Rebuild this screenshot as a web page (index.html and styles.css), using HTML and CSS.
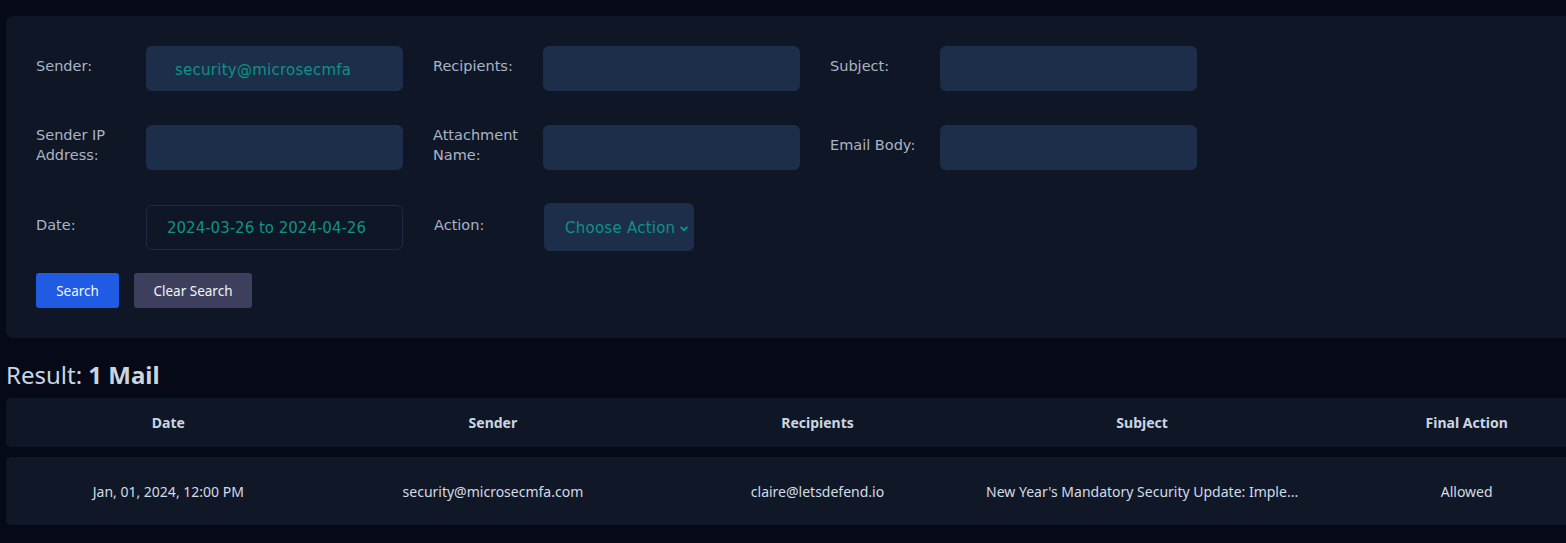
FILE: index.html
```html
<!DOCTYPE html>
<html lang="en">
<head>
<meta charset="utf-8">
<title>Mail Search</title>
<link rel="stylesheet" href="styles.css">
</head>
<body>
<div class="page">
  <section class="panel">
    <div class="form-row">
      <div class="field">
        <label class="label">Sender:</label>
        <div class="input filled">security@microsecmfa</div>
      </div>
      <div class="field">
        <label class="label">Recipients:</label>
        <div class="input"></div>
      </div>
      <div class="field">
        <label class="label">Subject:</label>
        <div class="input"></div>
      </div>
    </div>
    <div class="form-row">
      <div class="field">
        <label class="label">Sender IP Address:</label>
        <div class="input"></div>
      </div>
      <div class="field">
        <label class="label">Attachment Name:</label>
        <div class="input"></div>
      </div>
      <div class="field">
        <label class="label">Email Body:</label>
        <div class="input"></div>
      </div>
    </div>
    <div class="form-row last">
      <div class="field">
        <label class="label">Date:</label>
        <div class="input date">2024-03-26 to 2024-04-26</div>
      </div>
      <div class="field action">
        <label class="label">Action:</label>
        <div class="select">
          <span>Choose Action</span>
          <svg class="chev" width="8" height="6" viewBox="0 0 8 6"><path d="M1.2 1.4 L4 4.2 L6.8 1.4" fill="none" stroke="currentColor" stroke-width="2" stroke-linecap="round" stroke-linejoin="round"/></svg>
        </div>
      </div>
    </div>
    <div class="buttons">
      <button class="btn btn-primary">Search</button>
      <button class="btn btn-secondary">Clear Search</button>
    </div>
  </section>

  <h2 class="result">Result: <strong>1 Mail</strong></h2>

  <div class="table">
    <div class="thead">
      <div class="cell">Date</div>
      <div class="cell">Sender</div>
      <div class="cell">Recipients</div>
      <div class="cell">Subject</div>
      <div class="cell">Final Action</div>
    </div>
    <div class="trow">
      <div class="cell">Jan, 01, 2024, 12:00 PM</div>
      <div class="cell">security@microsecmfa.com</div>
      <div class="cell">claire@letsdefend.io</div>
      <div class="cell">New Year's Mandatory Security Update: Imple...</div>
      <div class="cell">Allowed</div>
    </div>
  </div>
</div>
</body>
</html>
```
FILE: styles.css
```css
html, body {
  margin: 0;
  padding: 0;
  overflow: hidden;
  background: #060a18;
}
body {
  font-family: "Noto Sans", "Open Sans", sans-serif;
  color: #cbd5e1;
}
.page {
  width: 1623px;
  padding: 16px 0 0 6px;
}
.panel {
  background: #0f1726;
  border-radius: 7px;
  padding: 30px;
  display: flex;
  flex-direction: column;
  gap: 34px;
}
.form-row {
  display: flex;
  align-items: center;
  gap: 30px;
}
.form-row.last {
  margin-top: -1px;
}
.field {
  display: flex;
  align-items: center;
}
.field.action {
  margin-left: 1px;
}
.label {
  width: 110px;
  flex: none;
  font-family: "DejaVu Sans", Verdana, sans-serif;
  font-size: 14.5px;
  line-height: 20px;
  color: #aab4c3;
  padding-bottom: 5px;
  padding-right: 10px;
  box-sizing: border-box;
}
.input {
  width: 257px;
  height: 45px;
  box-sizing: border-box;
  background: #1c2e4a;
  border-radius: 6px;
  font-family: "DejaVu Sans", Verdana, sans-serif;
  font-size: 15px;
  color: #0e9283;
  display: flex;
  align-items: center;
  white-space: nowrap;
}
.input.filled {
  padding: 2px 0 0 29px;
  letter-spacing: 0.25px;
}
.input.date {
  background: transparent;
  border: 1px solid #1c2b45;
  padding: 2px 0 0 20px;
}
.select {
  width: 150px;
  height: 48px;
  box-sizing: border-box;
  background: #1c2e4a;
  border-radius: 6px;
  font-family: "DejaVu Sans", Verdana, sans-serif;
  font-size: 15px;
  letter-spacing: 0.25px;
  color: #0e9283;
  display: flex;
  align-items: center;
  padding: 2px 0 0 21px;
  white-space: nowrap;
  gap: 5px;
}
.chev {
  flex: none;
  color: #0e9283;
  margin-top: 1px;
}
.buttons {
  display: flex;
  gap: 15px;
  margin-top: -12px;
}
.btn {
  height: 35px;
  border: 0;
  border-radius: 3px;
  font-family: "Noto Sans", sans-serif;
  font-size: 13.5px;
  color: #f1f5f9;
  padding: 0;
  white-space: nowrap;
  cursor: pointer;
}
.btn-primary {
  background: #1f5be3;
  width: 83px;
}
.btn-secondary {
  background: #3e3f5c;
  width: 118px;
}
.result {
  margin: 20px 0 6px 0;
  font-family: "Noto Sans", sans-serif;
  font-size: 24px;
  line-height: 34px;
  font-weight: 400;
  color: #cbd5e1;
}
.result strong {
  font-weight: 700;
}
.table {
  display: flex;
  flex-direction: column;
  gap: 10px;
}
.thead, .trow {
  display: grid;
  grid-template-columns: repeat(5, 1fr);
  background: #0f1726;
  border-radius: 5px;
  align-items: center;
}
.thead {
  height: 49px;
  font-weight: 700;
  font-size: 14px;
}
.trow {
  height: 68px;
  font-size: 14px;
  color: #d3dbe6;
  background: #101827;
}
.cell {
  text-align: center;
  white-space: nowrap;
}
```
